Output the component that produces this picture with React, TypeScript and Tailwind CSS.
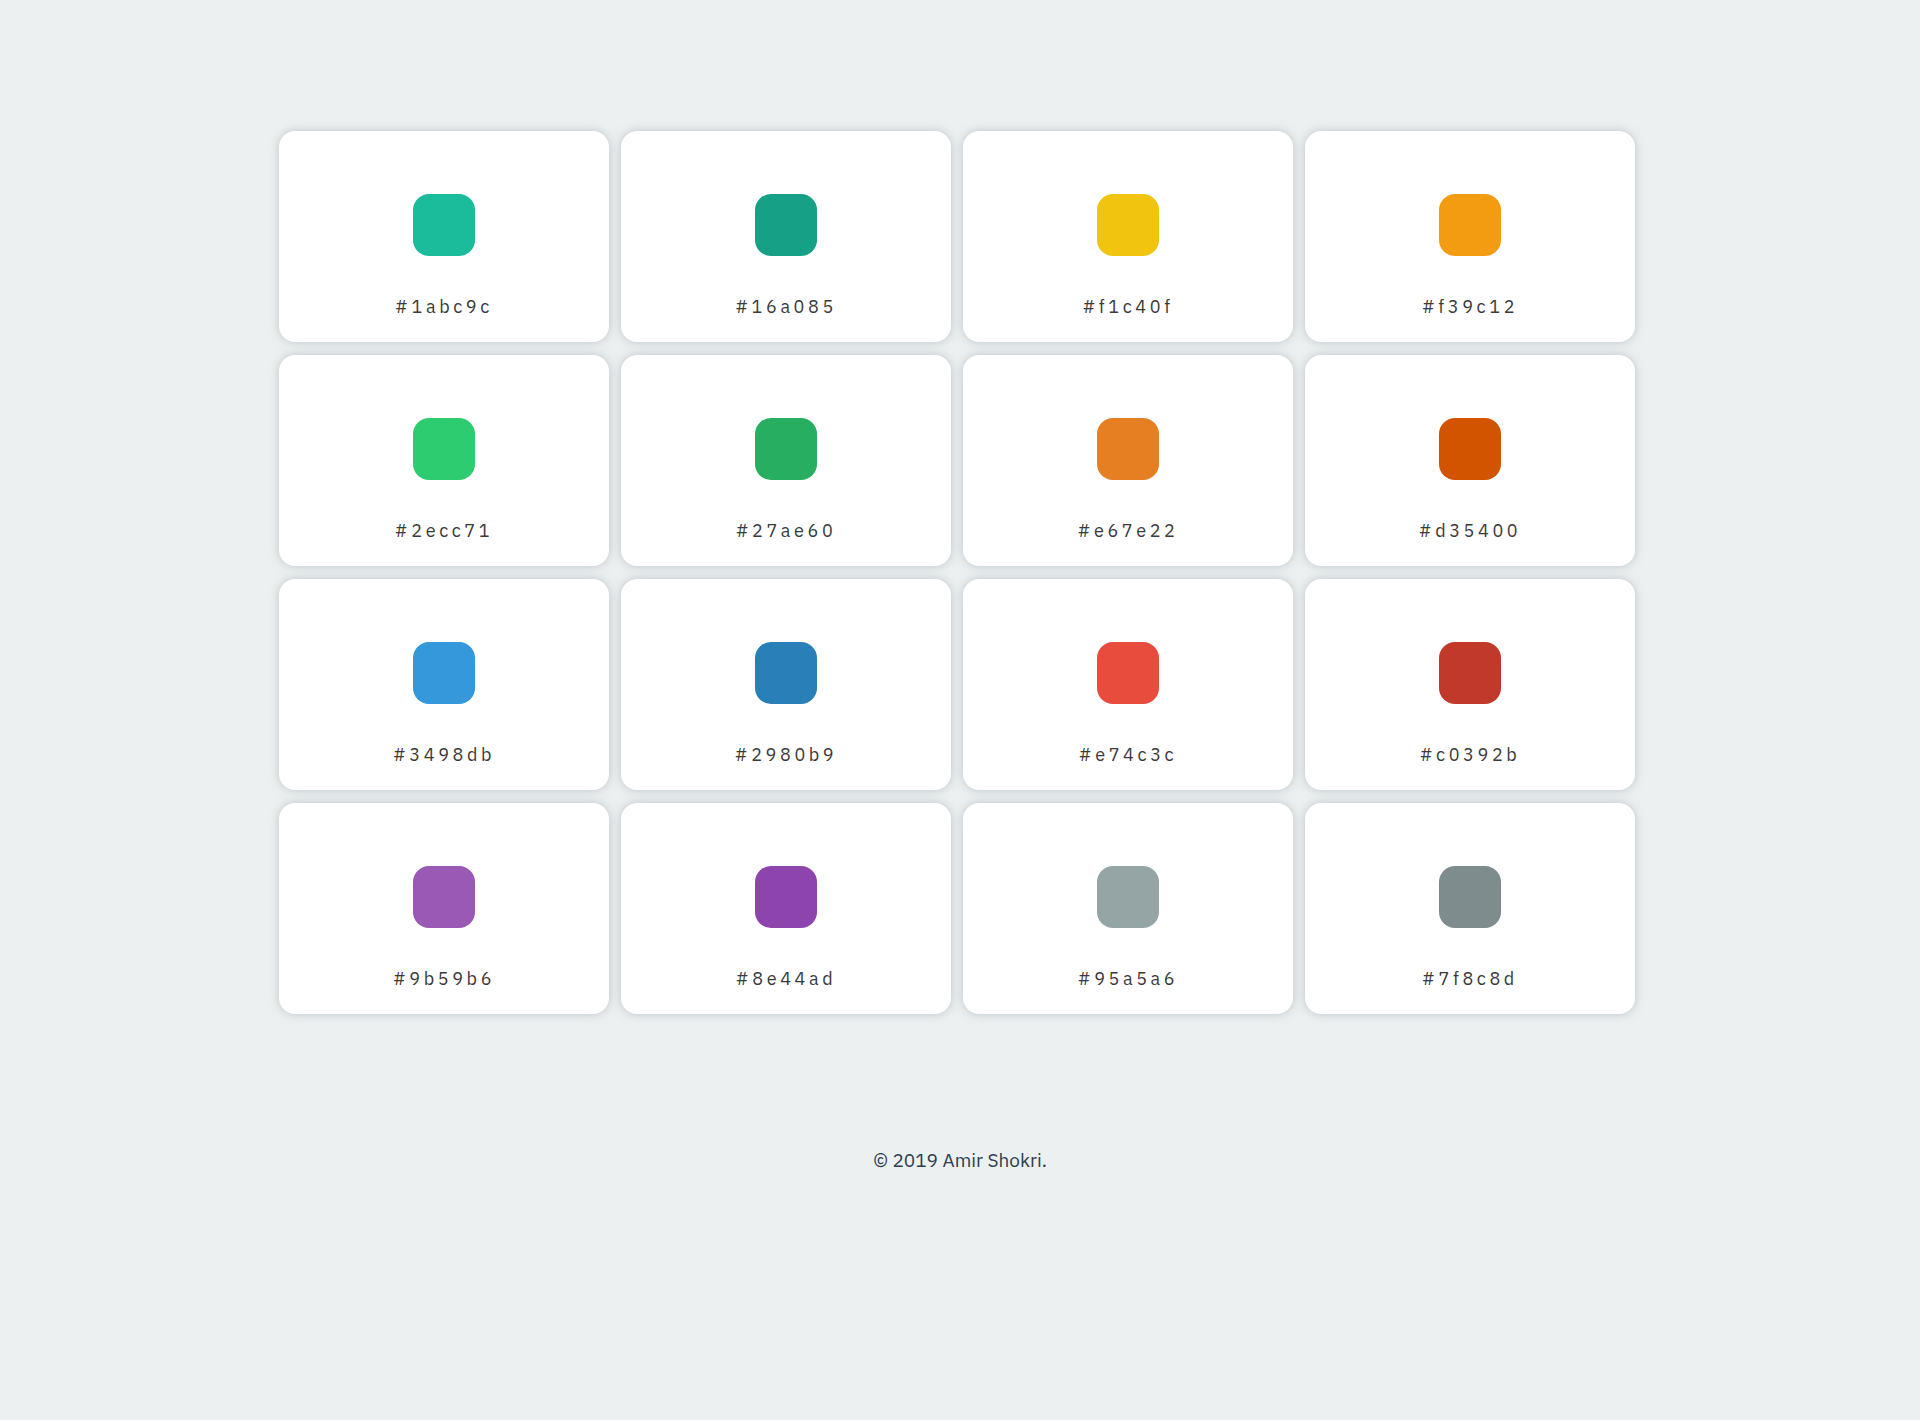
const colors = [
  '#1abc9c', '#16a085', '#f1c40f', '#f39c12',
  '#2ecc71', '#27ae60', '#e67e22', '#d35400',
  '#3498db', '#2980b9', '#e74c3c', '#c0392b',
  '#9b59b6', '#8e44ad', '#95a5a6', '#7f8c8d',
];

function ColorCard({ hex }: { hex: string }) {
  return (
    <div className="h-[211px] bg-white rounded-[16px] shadow-[0_0_10px_rgba(140,155,160,0.5)] flex flex-col items-center pt-[63px]">
      <div className="w-[62px] h-[62px] rounded-[16px]" style={{ backgroundColor: hex }} />
      <p className="mt-[39px] text-[18px] leading-6 tracking-[0.2em] text-[#3a3a3a]">
        {hex}
      </p>
    </div>
  );
}

export default function App() {
  return (
    <div className="min-h-[1420px] bg-[#ecf0f1] font-['IBM_Plex_Sans','Liberation_Sans',sans-serif]">
      <div className="w-[1356px] ml-[279px] pt-[131px] grid grid-cols-4 gap-x-[12px] gap-y-[13px]">
        {colors.map((c) => (
          <ColorCard key={c} hex={c} />
        ))}
      </div>
      <footer className="mt-[134px] text-center text-[19px] leading-6 text-[#2c3e50]">
        © 2019 Amir Shokri.
      </footer>
    </div>
  );
}
